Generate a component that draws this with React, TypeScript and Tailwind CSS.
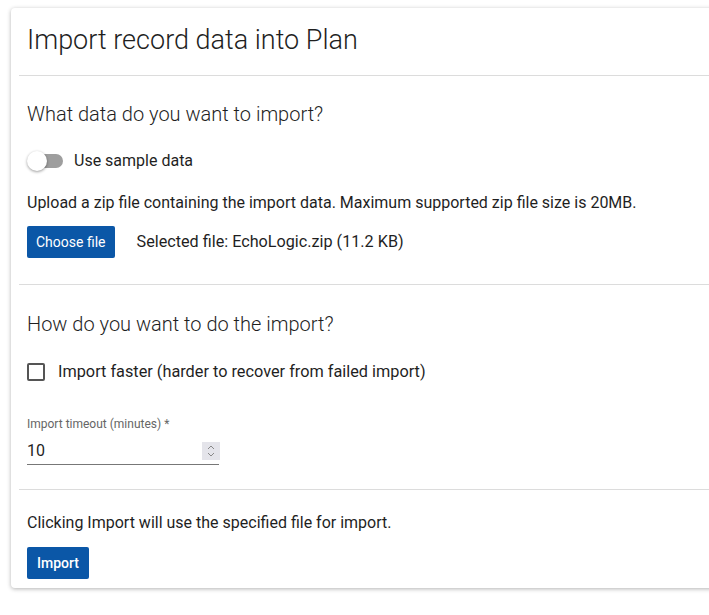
export default function App() {
  const f = { fontFamily: 'Roboto, "Liberation Sans", sans-serif' };
  return (
    <div className="bg-white h-[615px] w-[709px] overflow-hidden pl-[11px] pt-[8px]" style={f}>
      <div className="w-[720px] h-[580px] bg-white rounded-[4px] shadow-[0_1px_4px_rgba(0,0,0,0.3)] text-[#1f1f1f]">
        <div className="h-[67px] flex items-center pl-[16px] text-[27px] font-light pb-[2px]">Import record data into Plan</div>
        <div className="ml-[8px] border-t border-[#dcdcdc]" />
        <div className="pl-[16px] pt-[25px]">
          <div className="text-[20px] font-light leading-[26px]">What data do you want to import?</div>
          <div className="flex items-center mt-[21px] h-[26px]">
            <div className="relative w-[36px] h-[20px] flex items-center">
              <div className="ml-[2px] w-[34px] h-[14px] rounded-full bg-[#9e9e9e]" />
              <div className="absolute left-0 top-0 w-[20px] h-[20px] rounded-full bg-white shadow-[0_1px_3px_rgba(0,0,0,0.4)]" />
            </div>
            <span className="ml-[11px] text-[16px]">Use sample data</span>
          </div>
          <div className="mt-[18px] text-[16px] leading-[22px]">Upload a zip file containing the import data. Maximum supported zip file size is 20MB.</div>
          <div className="flex items-center mt-[12px]">
            <button className="h-[32px] px-[9px] bg-[#0b57a7] text-white text-[14px] rounded-[2px]">Choose file</button>
            <span className="ml-[22px] text-[16.2px]">Selected file: EchoLogic.zip (11.2 KB)</span>
          </div>
        </div>
        <div className="ml-[8px] border-t border-[#dcdcdc] mt-[26px]" />
        <div className="pl-[16px] pt-[26px]">
          <div className="text-[20px] font-light leading-[26px]">How do you want to do the import?</div>
          <div className="flex items-center mt-[23px] h-[24px]">
            <div className="w-[18px] h-[18px] border-2 border-[#555] rounded-[2px]" />
            <span className="ml-[13px] text-[16.3px]">Import faster (harder to recover from failed import)</span>
          </div>
          <div className="mt-[33px] text-[12px] text-[#666] leading-[14px]">Import timeout (minutes) *</div>
          <div className="w-[192px] mt-[6px] border-b border-[#777] flex items-center justify-between h-[28px]">
            <span className="text-[16px]">10</span>
            <div className="w-[18px] h-[18px] bg-[#e4e4ea] flex flex-col items-center justify-center text-[#888] mr-[-1px]">
              <svg width="8" height="14" viewBox="0 0 8 14" fill="none" stroke="#888" strokeWidth="1">
                <path d="M1 5 L4 2 L7 5" /><path d="M1 9 L4 12 L7 9" />
              </svg>
            </div>
          </div>
        </div>
        <div className="ml-[8px] border-t border-[#dcdcdc] mt-[24px]" />
        <div className="pl-[16px] pt-[22px]">
          <div className="text-[16px] leading-[22px]">Clicking Import will use the specified file for import.</div>
          <button className="mt-[13px] h-[32px] px-[10px] bg-[#0b57a7] text-white text-[14px] font-medium rounded-[2px]">Import</button>
        </div>
      </div>
    </div>
  );
}
